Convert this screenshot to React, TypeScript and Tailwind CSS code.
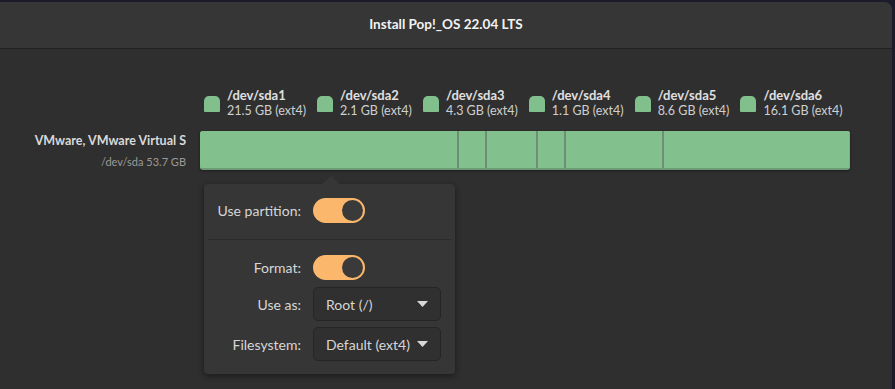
import React from "react";

const parts = [
  { name: "/dev/sda1", size: "21.5 GB (ext4)", w: 259 },
  { name: "/dev/sda2", size: "2.1 GB (ext4)", w: 28 },
  { name: "/dev/sda3", size: "4.3 GB (ext4)", w: 51 },
  { name: "/dev/sda4", size: "1.1 GB (ext4)", w: 28 },
  { name: "/dev/sda5", size: "8.6 GB (ext4)", w: 98 },
  { name: "/dev/sda6", size: "16.1 GB (ext4)", w: 186 },
];

function Switch() {
  return (
    <div className="w-[52px] h-[25px] rounded-full bg-[#fbb86c] flex items-center justify-end pr-[2px]">
      <div className="w-[21px] h-[21px] rounded-full bg-[#3a3a3a]" />
    </div>
  );
}

function Label({ text }: { text: string }) {
  return (
    <div className="w-[83px] flex justify-end whitespace-nowrap text-[14px] text-[#d6d6d6]">
      <span>{text}</span>
    </div>
  );
}

function Dropdown({ text }: { text: string }) {
  return (
    <div className="w-[128px] h-[34px] rounded-[5px] bg-[#303030] border border-[#252525] flex items-center pl-[12px] pr-[12px] text-[14px] text-[#d6d6d6]">
      <span className="flex-1">{text}</span>
      <svg width="11" height="6" viewBox="0 0 11 6">
        <path d="M0 0 H11 L5.5 6 Z" fill="#d8d8d8" />
      </svg>
    </div>
  );
}

export default function App() {
  return (
    <div
      className="w-[895px] h-[389px] bg-[#1c1b2c] pt-[2px] pr-[3px] overflow-hidden"
      style={{ fontFamily: "Lato, 'Open Sans', sans-serif" }}
    >
      <div className="h-full rounded-tr-[8px] overflow-hidden flex flex-col bg-[#2f2f2f]">
        <div className="h-[47px] shrink-0 bg-[#363636] border-b border-[#222222] flex items-center justify-center">
          <span className="text-[13.5px] font-bold text-[#f2f2f2] -mt-[2px]">Install Pop!_OS 22.04 LTS</span>
        </div>
        <div className="flex-1 flex flex-col pt-[39px]">
          <div className="flex pl-[204px] gap-[11px]">
            {parts.map((p) => (
              <div key={p.name} className="flex items-start gap-[7px]">
                <div className="w-[16px] h-[16px] mt-[8px] rounded-t-[5px] rounded-b-[1px] bg-[#81c08d]" />
                <div className="flex flex-col leading-[15px]">
                  <span className="font-bold text-[13px] text-[#e0e0e0]">{p.name}</span>
                  <span className="text-[12.5px] text-[#cfcfcf]">{p.size}</span>
                </div>
              </div>
            ))}
          </div>
          <div className="flex mt-[13px] items-start">
            <div className="w-[186px] flex flex-col items-end pt-[2px]">
              <span className="text-[12.5px] font-bold text-[#d9d9d9] leading-[16px]">VMware, VMware Virtual S</span>
              <span className="text-[11px] text-[#9a9a9a] leading-[14px] mt-[6px]">/dev/sda 53.7 GB</span>
            </div>
            <div className="ml-[14px] flex h-[39px] rounded-[3px] overflow-hidden shadow-[0_1px_3px_rgba(0,0,0,0.4)] border-b-2 border-[#6b9a75] bg-[#81c08d]">
              {parts.map((p, i) => (
                <div
                  key={p.name}
                  className={
                    "h-full bg-[#82c08e] " +
                    (i < parts.length - 1 ? "border-r-2 border-[#6f8f75]" : "border-r border-[#8aa890]")
                  }
                  style={{ width: p.w }}
                />
              ))}
            </div>
          </div>
          <div className="relative ml-[204px] mt-[14px] w-[251px] h-[190px] bg-[#363636] rounded-[4px] shadow-[0_2px_6px_rgba(0,0,0,0.45)] px-[14px]">
            <div className="absolute -top-[8px] left-[118px] w-0 h-0 border-l-[9px] border-r-[9px] border-b-[8px] border-l-transparent border-r-transparent border-b-[#363636]" />
            <div className="flex items-center gap-[12px] h-[53px]">
              <Label text="Use partition:" />
              <Switch />
            </div>
            <div className="h-px bg-[#2b2b2b] -mx-[10px] mt-[2px]" />
            <div className="flex items-center gap-[12px] mt-[15px]">
              <Label text="Format:" />
              <Switch />
            </div>
            <div className="flex items-center gap-[12px] mt-[7px]">
              <Label text="Use as:" />
              <Dropdown text="Root (/)" />
            </div>
            <div className="flex items-center gap-[12px] mt-[6px]">
              <Label text="Filesystem:" />
              <Dropdown text="Default (ext4)" />
            </div>
          </div>
        </div>
      </div>
    </div>
  );
}
